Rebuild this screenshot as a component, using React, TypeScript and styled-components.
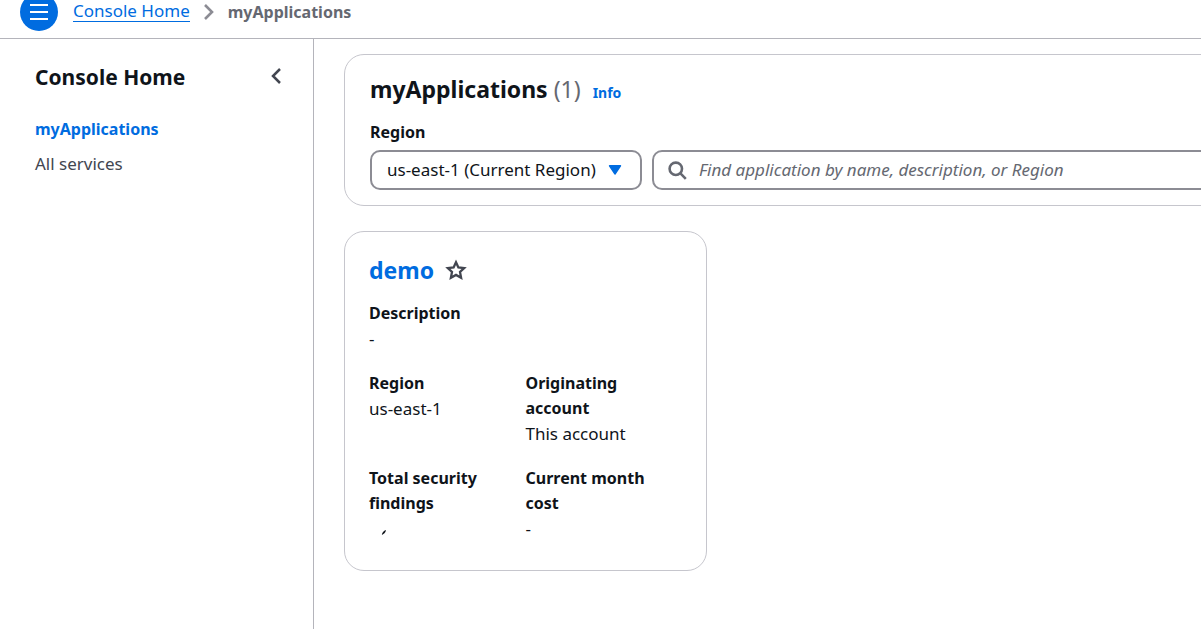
import React from "react";
import styled, { createGlobalStyle } from "styled-components";

const GlobalStyle = createGlobalStyle`
  *, *::before, *::after { box-sizing: border-box; }
  html, body { margin: 0; overflow-x: hidden; background: #ffffff; }
  body, button, input, select {
    font-family: "Noto Sans", "Open Sans", sans-serif;
    font-size: 17px;
    line-height: 25px;
    color: #0f141a;
  }
`;

const Page = styled.div`
  display: flex;
  flex-direction: column;
  min-height: 100vh;
  overflow: hidden;
`;

const TopBar = styled.header`
  display: flex;
  align-items: center;
  margin-top: -7px;
  padding: 0 20px 7px;
  border-bottom: 1px solid #b4b4bb;
`;

const MenuButton = styled.button`
  display: flex;
  align-items: center;
  justify-content: center;
  width: 38px;
  height: 38px;
  margin-right: 15px;
  padding: 0;
  border: 0;
  border-radius: 50%;
  background: #006ce0;
`;

const Crumbs = styled.nav`
  display: flex;
  align-items: center;
  gap: 13px;
  line-height: 20px;
`;

const CrumbLink = styled.a`
  display: block;
  line-height: 18px;
  padding-bottom: 1px;
  color: #006ce0;
  text-decoration: none;
  border-bottom: 1px solid #006ce0;
`;

const CrumbCurrent = styled.span`
  color: #656871;
  font-size: 16px;
  font-weight: 700;
`;

const Body = styled.div`
  display: flex;
  flex: 1;
`;

const SideNav = styled.nav`
  flex: 0 0 314px;
  padding: 22px 31px 20px 35px;
  border-right: 1px solid #b4b4bb;
`;

const SideHead = styled.div`
  display: flex;
  align-items: center;
  justify-content: space-between;
  margin-bottom: 24px;
`;

const SideTitle = styled.h2`
  margin: 0;
  font-size: 21px;
  line-height: 32px;
  font-weight: 700;
`;

const IconButton = styled.button`
  display: flex;
  padding: 0;
  border: 0;
  background: none;
`;

const SideList = styled.ul`
  display: flex;
  flex-direction: column;
  gap: 9px;
  margin: 0;
  padding: 0;
  list-style: none;
`;

const SideLink = styled.a<{ $active?: boolean }>`
  display: block;
  color: ${(p) => (p.$active ? "#006ce0" : "#424650")};
  font-size: ${(p) => (p.$active ? 16 : 17)}px;
  font-weight: ${(p) => (p.$active ? 700 : 400)};
  text-decoration: none;
`;

const Main = styled.main`
  flex: 1;
  min-width: 0;
  padding: 15px 0 30px 30px;
`;

const Panel = styled.section`
  border: 1px solid #c6c6cd;
  border-radius: 20px;
  background: #ffffff;
`;

const FilterPanel = styled(Panel)`
  margin-right: -40px;
  padding: 18px 25px 15px;
`;

const PanelHead = styled.div`
  display: flex;
  align-items: baseline;
`;

const PanelTitle = styled.h1`
  margin: 0;
  font-size: 23px;
  line-height: 32px;
  font-weight: 700;
`;

const Count = styled.span`
  margin-left: 6px;
  color: #656871;
  font-weight: 400;
`;

const InfoLink = styled.a`
  margin-left: 12px;
  color: #006ce0;
  font-size: 14px;
  line-height: 20px;
  font-weight: 700;
  text-decoration: none;
`;

const Label = styled.label`
  display: block;
  margin: 15px 0 5px;
  font-size: 16px;
  font-weight: 700;
`;

const Controls = styled.div`
  display: flex;
  gap: 10px;
`;

const Field = styled.div`
  display: flex;
  align-items: center;
  height: 40px;
  border: 2px solid #8c8c94;
  border-radius: 10px;
`;

const SelectField = styled(Field)`
  position: relative;
  flex: 0 0 272px;
`;

const Select = styled.select`
  appearance: none;
  width: 100%;
  height: 100%;
  padding: 0 40px 2px 15px;
  border: 0;
  background: none;
`;

const Caret = styled.svg`
  position: absolute;
  right: 18px;
  pointer-events: none;
`;

const SearchField = styled(Field)`
  flex: 1;
  gap: 12px;
  padding: 0 14px;
`;

const SearchInput = styled.input`
  flex: 1;
  min-width: 0;
  padding: 0 0 2px;
  border: 0;
  outline: 0;
  background: none;

  &::placeholder {
    color: #656871;
    font-style: italic;
    opacity: 1;
  }
`;

const AppCard = styled(Panel)`
  width: 363px;
  max-width: 100%;
  margin-top: 25px;
  padding: 22px 24px 29px;
`;

const CardHead = styled.div`
  display: flex;
  align-items: center;
  gap: 11px;
  margin-bottom: 15px;
`;

const CardTitle = styled.h2`
  margin: 0;
  font-size: 23px;
  line-height: 32px;
  font-weight: 700;
`;

const CardLink = styled.a`
  color: #006ce0;
  text-decoration: none;
`;

const Details = styled.dl`
  display: grid;
  grid-template-columns: 1fr 1fr;
  row-gap: 20px;
  margin: 0;
`;

const Detail = styled.div<{ $wide?: boolean }>`
  grid-column: ${(p) => (p.$wide ? "1 / -1" : "auto")};
  padding-right: 24px;
`;

const Term = styled.dt`
  font-size: 16px;
  font-weight: 700;
`;

const Value = styled.dd`
  margin: 0;
`;

const Spinner = styled.svg`
  display: block;
`;

export default function App() {
  return (
    <Page>
      <GlobalStyle />
      <TopBar>
        <MenuButton aria-label="Open navigation">
          <svg width="18" height="16" viewBox="0 0 18 16" stroke="#ffffff" strokeWidth="2">
            <path d="M0 1h18M0 8h18M0 15h18" />
          </svg>
        </MenuButton>
        <Crumbs aria-label="Breadcrumbs">
          <CrumbLink href="#home">Console Home</CrumbLink>
          <svg width="12" height="18" viewBox="0 0 12 18" fill="none" stroke="#8c8c94" strokeWidth="2.6">
            <path d="M2 2l7 7-7 7" />
          </svg>
          <CrumbCurrent aria-current="page">myApplications</CrumbCurrent>
        </Crumbs>
      </TopBar>
      <Body>
        <SideNav aria-label="Console Home">
          <SideHead>
            <SideTitle>Console Home</SideTitle>
            <IconButton aria-label="Close navigation">
              <svg width="12" height="18" viewBox="0 0 12 18" fill="none" stroke="#424650" strokeWidth="2.5">
                <path d="M10 1L3 8l7 7" />
              </svg>
            </IconButton>
          </SideHead>
          <SideList>
            <li>
              <SideLink href="#applications" $active>myApplications</SideLink>
            </li>
            <li>
              <SideLink href="#services">All services</SideLink>
            </li>
          </SideList>
        </SideNav>
        <Main>
          <FilterPanel>
            <PanelHead>
              <PanelTitle>
                myApplications<Count>(1)</Count>
              </PanelTitle>
              <InfoLink href="#info">Info</InfoLink>
            </PanelHead>
            <Label htmlFor="region">Region</Label>
            <Controls>
              <SelectField>
                <Select id="region">
                  <option>us-east-1 (Current Region)</option>
                </Select>
                <Caret width="14" height="12" viewBox="0 0 14 12">
                  <path d="M1.5 1.8h11L7 10z" fill="#006ce0" stroke="#006ce0" strokeWidth="1.4" strokeLinejoin="round" />
                </Caret>
              </SelectField>
              <SearchField>
                <svg width="19" height="19" viewBox="0 0 19 19" fill="none" stroke="#656871" strokeWidth="2.6">
                  <circle cx="7.8" cy="7.8" r="6.2" />
                  <path d="M12.2 12.2l5.6 5.6" />
                </svg>
                <SearchInput
                  type="search"
                  aria-label="Find application"
                  placeholder="Find application by name, description, or Region"
                />
              </SearchField>
            </Controls>
          </FilterPanel>
          <AppCard>
            <CardHead>
              <CardTitle>
                <CardLink href="#demo">demo</CardLink>
              </CardTitle>
              <IconButton aria-label="Add demo to favorites">
                <svg width="22" height="22" viewBox="0 0 22 22" fill="none" stroke="#424650" strokeWidth="2.3">
                  <path d="M11 3.2l2.4 5.2 5.8.7-4.2 3.9 1.1 5.7L11 15.9l-5.1 2.8L7 13 2.8 9.1l5.8-.7z" />
                </svg>
              </IconButton>
            </CardHead>
            <Details>
              <Detail $wide>
                <Term>Description</Term>
                <Value>-</Value>
              </Detail>
              <Detail>
                <Term>Region</Term>
                <Value>us-east-1</Value>
              </Detail>
              <Detail>
                <Term>Originating account</Term>
                <Value>This account</Value>
              </Detail>
              <Detail>
                <Term>Total security findings</Term>
                <Value>
                  <Spinner width="20" height="25" viewBox="0 0 20 25" role="img" aria-label="Loading">
                    <path d="M17 14c-.3 2.2-1.7 4-4.2 5 .2-2.2 1.7-4.2 4.2-5z" fill="#0f141a" />
                  </Spinner>
                </Value>
              </Detail>
              <Detail>
                <Term>Current month cost</Term>
                <Value>-</Value>
              </Detail>
            </Details>
          </AppCard>
        </Main>
      </Body>
    </Page>
  );
}
